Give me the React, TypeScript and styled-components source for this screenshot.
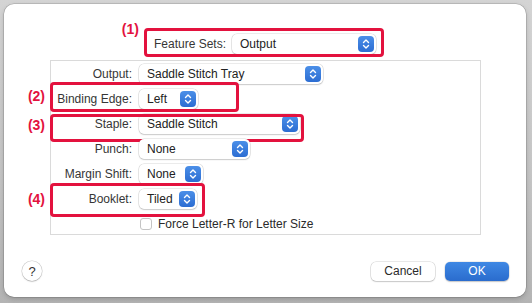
import React from 'react';
import styled, { createGlobalStyle } from 'styled-components';

const GlobalStyle = createGlobalStyle`
  html, body {
    margin: 0;
    padding: 0;
  }
  body {
    width: 532px;
    height: 303px;
    overflow: hidden;
    background: #c6c6c6;
    font-family: 'Liberation Sans', Arial, sans-serif;
    -webkit-font-smoothing: antialiased;
  }
`;

const RED = '#e3123e';

const Backdrop = styled.div`
  width: 532px;
  height: 303px;
  box-sizing: border-box;
  padding: 4px 6px 6px 4px;
  background: linear-gradient(#d4d4d4, #c4c4c4 60%, #b4b4b4);
`;

const Dialog = styled.div`
  height: 100%;
  box-sizing: border-box;
  background: #fff;
  border-radius: 10px;
  box-shadow: 0 0 0 0.5px rgba(0, 0, 0, 0.22), 0 2px 5px rgba(0, 0, 0, 0.18);
  padding: 30px 17px 16px;
  display: flex;
  flex-direction: column;
`;

const Header = styled.div`
  display: flex;
  justify-content: center;
  height: 20px;
`;

const HeaderGroup = styled.div`
  position: relative;
  display: flex;
  align-items: center;
  gap: 6px;
`;

const Panel = styled.div`
  margin: 6px 28px 0 29px;
  height: 175px;
  box-sizing: border-box;
  border: 1px solid #dadada;
  display: flex;
  flex-direction: column;
`;

const Row = styled.div<{ $h?: number; $padTop?: number }>`
  position: relative;
  display: grid;
  grid-template-columns: 81px auto;
  column-gap: 7px;
  align-items: center;
  box-sizing: border-box;
  height: ${(p) => p.$h ?? 25}px;
  padding-top: ${(p) => p.$padTop ?? 0}px;
`;

const Label = styled.div`
  text-align: right;
  font-size: 12px;
  color: #363636;
  white-space: nowrap;
`;

const PopupBox = styled.div<{ $w: number }>`
  display: flex;
  align-items: center;
  justify-content: space-between;
  width: ${(p) => p.$w}px;
  height: 20px;
  box-sizing: border-box;
  padding: 0 2px 0 8px;
  background: #fff;
  border-radius: 5px;
  box-shadow: 0 0 0 0.5px rgba(0, 0, 0, 0.16), 0 1px 1.5px rgba(0, 0, 0, 0.14);
  font-size: 12px;
  color: #222;
  white-space: nowrap;
`;

const Stepper = styled.div`
  width: 16px;
  height: 16px;
  border-radius: 4px;
  background: linear-gradient(#4b8fe8, #2c6dd2);
  display: flex;
  align-items: center;
  justify-content: center;
  flex: none;
`;

const Callout = styled.div<{ $left: number; $top: number; $w: number; $h: number }>`
  position: absolute;
  left: ${(p) => p.$left}px;
  top: ${(p) => p.$top}px;
  width: ${(p) => p.$w}px;
  height: ${(p) => p.$h}px;
  box-sizing: border-box;
  border: 3px solid ${RED};
  border-radius: 4px;
  pointer-events: none;
`;

const Marker = styled.span<{ $top: number }>`
  position: absolute;
  right: calc(100% + 8px);
  top: ${(p) => p.$top}px;
  line-height: 16px;
  font-size: 14px;
  font-weight: 700;
  color: ${RED};
  white-space: nowrap;
`;

const CheckLine = styled.div`
  display: flex;
  align-items: center;
  gap: 6px;
  font-size: 12px;
  color: #2a2a2a;
  white-space: nowrap;
`;

const Checkbox = styled.div`
  width: 12px;
  height: 12px;
  box-sizing: border-box;
  margin-left: 1px;
  border: 1px solid #c4c4c4;
  border-radius: 3px;
  background: #fff;
`;

const Footer = styled.div`
  margin-top: auto;
  display: flex;
  align-items: center;
  gap: 10px;
  height: 20px;
`;

const HelpButton = styled.div`
  width: 20px;
  height: 20px;
  margin-left: 1px;
  margin-right: auto;
  border-radius: 50%;
  box-sizing: border-box;
  background: #fff;
  box-shadow: 0 0 0 0.5px rgba(0, 0, 0, 0.2), 0 1px 1.5px rgba(0, 0, 0, 0.15);
  display: flex;
  align-items: center;
  justify-content: center;
  font-size: 13px;
  color: #333;
`;

const Button = styled.div<{ $primary?: boolean }>`
  width: 64px;
  height: 19px;
  border-radius: 5px;
  display: flex;
  align-items: center;
  justify-content: center;
  font-size: 12px;
  color: ${(p) => (p.$primary ? '#fff' : '#2a2a2a')};
  background: ${(p) => (p.$primary ? 'linear-gradient(#3f88e4, #2a6ccd)' : '#fff')};
  box-shadow: ${(p) =>
    p.$primary
      ? '0 0 0 0.5px rgba(0,0,0,0.12), 0 1px 1.5px rgba(0,0,0,0.18)'
      : '0 0 0 0.5px rgba(0,0,0,0.18), 0 1px 1.5px rgba(0,0,0,0.14)'};
`;

const Chevrons = () => (
  <svg width="10" height="12" viewBox="0 0 10 12">
    <path d="M2.5 4.5 L5 2 L7.5 4.5" fill="none" stroke="#fff" strokeWidth="1.4" strokeLinecap="round" strokeLinejoin="round" />
    <path d="M2.5 7.5 L5 10 L7.5 7.5" fill="none" stroke="#fff" strokeWidth="1.4" strokeLinecap="round" strokeLinejoin="round" />
  </svg>
);

const Popup = ({ value, width }: { value: string; width: number }) => (
  <PopupBox $w={width}>
    <span>{value}</span>
    <Stepper>
      <Chevrons />
    </Stepper>
  </PopupBox>
);

interface IMark {
  label: string;
  top: number;
  h: number;
  w: number;
  labelTop: number;
}

const fields: { label: string; value: string; width: number; mark?: IMark }[] = [
  { label: 'Output:', value: 'Saddle Stitch Tray', width: 184 },
  {
    label: 'Binding Edge:',
    value: 'Left',
    width: 59,
    mark: { label: '(2)', top: -4, h: 30, w: 189, labelTop: 3 },
  },
  {
    label: 'Staple:',
    value: 'Saddle Stitch',
    width: 161,
    mark: { label: '(3)', top: 3, h: 28, w: 254, labelTop: 0 },
  },
  { label: 'Punch:', value: 'None', width: 111 },
  { label: 'Margin Shift:', value: 'None', width: 64 },
  {
    label: 'Booklet:',
    value: 'Tiled',
    width: 58,
    mark: { label: '(4)', top: -3, h: 34, w: 155, labelTop: 5 },
  },
];

const App = () => {
  return (
    <>
      <GlobalStyle />
      <Backdrop>
        <Dialog>
          <Header>
            <HeaderGroup>
              <Label>Feature Sets:</Label>
              <Popup value="Output" width={144} />
              <Callout $left={-10} $top={-6} $w={240} $h={29}>
                <Marker $top={-10}>(1)</Marker>
              </Callout>
            </HeaderGroup>
          </Header>
          <Panel>
            {fields.map((f) => (
              <Row key={f.label}>
                <Label>{f.label}</Label>
                <Popup value={f.value} width={f.width} />
                {f.mark && (
                  <Callout $left={-1} $top={f.mark.top} $w={f.mark.w} $h={f.mark.h}>
                    <Marker $top={f.mark.labelTop}>{f.mark.label}</Marker>
                  </Callout>
                )}
              </Row>
            ))}
            <Row $h={23} $padTop={3}>
              <span />
              <CheckLine>
                <Checkbox />
                Force Letter-R for Letter Size
              </CheckLine>
            </Row>
          </Panel>
          <Footer>
            <HelpButton>?</HelpButton>
            <Button>Cancel</Button>
            <Button $primary>OK</Button>
          </Footer>
        </Dialog>
      </Backdrop>
    </>
  );
};

export default App;
